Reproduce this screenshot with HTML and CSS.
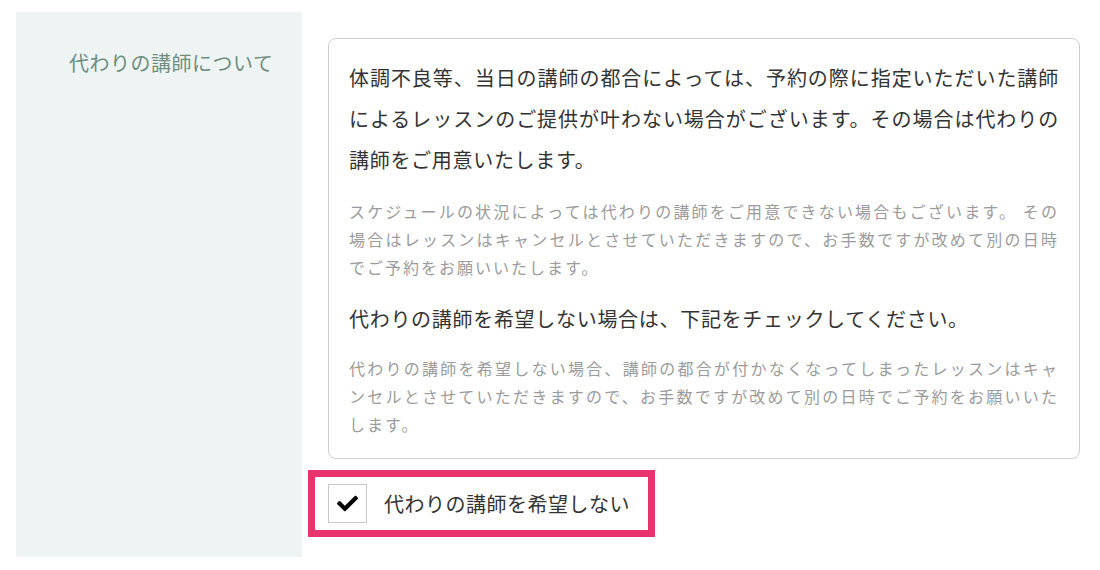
FILE: index.html
```html
<!DOCTYPE html>
<html lang="ja">
<head>
<meta charset="utf-8">
<link rel="stylesheet" href="styles.css">
</head>
<body>
<div class="row">
  <div class="head">代わりの講師について</div>
  <div class="body">
    <div class="box">
      <p class="lead">体調不良等、当日の講師の都合によっては、予約の際に指定いただいた講師によるレッスンのご提供が叶わない場合がございます。その場合は代わりの講師をご用意いたします。</p>
      <p class="note note1">スケジュールの状況によっては代わりの講師をご用意できない場合もございます。 その場合はレッスンはキャンセルとさせていただきますので、お手数ですが改めて別の日時でご予約をお願いいたします。</p>
      <p class="sub">代わりの講師を希望しない場合は、下記をチェックしてください。</p>
      <p class="note note2">代わりの講師を希望しない場合、講師の都合が付かなくなってしまったレッスンはキャンセルとさせていただきますので、お手数ですが改めて別の日時でご予約をお願いいたします。</p>
    </div>
    <label class="check">
      <span class="cb"><svg viewBox="0 0 512 512" width="21" height="21"><path d="M173.9 439.4l-166.4-166.4c-10-10-10-26.2 0-36.2l36.2-36.2c10-10 26.2-10 36.2 0L192 312.7 432.1 72.6c10-10 26.2-10 36.2 0l36.2 36.2c10 10 10 26.2 0 36.2l-294.4 294.4c-10 10-26.2 10-36.2 0z" fill="#000"/></svg></span>
      <span class="check-text">代わりの講師を希望しない</span>
    </label>
  </div>
</div>
</body>
</html>
```
FILE: styles.css
```css
* { box-sizing: border-box; }
html, body { margin: 0; background: #fff; }
body {
  font-family: "Noto Sans CJK JP", "Noto Sans", sans-serif;
  color: #333;
}
.row {
  display: grid;
  grid-template-columns: 286px 1fr;
  column-gap: 6px;
  padding: 12px 20px 13px 16px;
}
.head {
  background: #eef4f4;
  color: #6f8d7f;
  font-size: 20px;
  letter-spacing: 0.5px;
  line-height: 41px;
  padding: 30px 0 0 53px;
}
.body {
  padding: 26px 0 20px 0;
}
.box {
  margin-left: 20px;
  border: 1px solid #cfcfcf;
  border-radius: 8px;
  padding: 18px 20px 20px 20px;
}
.box p { margin: 0; }
.lead {
  font-size: 20px;
  letter-spacing: 0.7px;
  line-height: 41px;
  text-align: justify;
}
.note {
  font-size: 16px;
  letter-spacing: 2px;
  line-height: 28px;
  color: #9b9b9b;
  text-align: justify;
}
.note1 { margin-top: 17px !important; }
.sub {
  font-size: 20px;
  letter-spacing: 0.7px;
  line-height: 36px;
  margin-top: 20px !important;
}
.note2 { margin-top: 17px !important; }
.check {
  display: inline-flex;
  align-items: center;
  gap: 17px;
  margin-top: 11px;
  border: 7px solid #e8336f;
  padding: 7px 18px 7px 13px;
}
.cb {
  width: 39px;
  height: 39px;
  border: 1px solid #c8c8c8;
  display: flex;
  align-items: center;
  justify-content: center;
  background: #fff;
}
.check-text {
  font-size: 20px;
  letter-spacing: 0.5px;
  line-height: 39px;
  color: #333;
}
```
